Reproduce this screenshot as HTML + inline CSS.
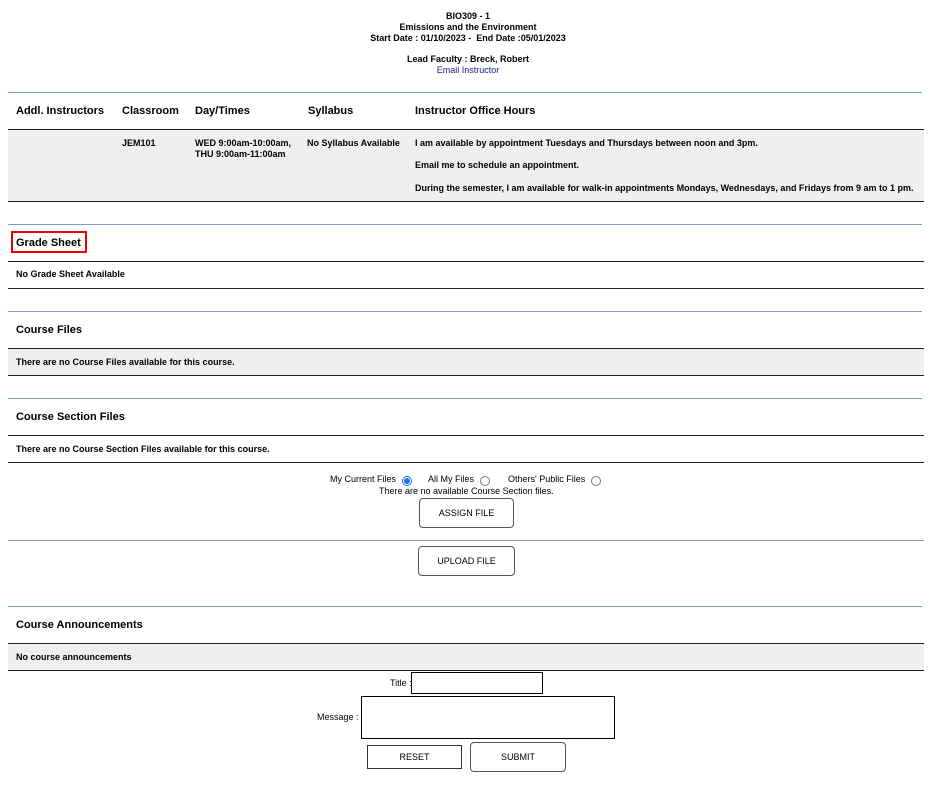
<!DOCTYPE html>
<html><head><meta charset="utf-8"><style>
*{margin:0;padding:0;box-sizing:border-box}
body{width:936px;height:789px;background:#fff;font-family:"Liberation Sans",Arial,sans-serif;color:#000;position:relative;overflow:hidden}
.a{position:absolute;white-space:nowrap}
.c{left:0;width:936px;text-align:center;font-size:9px;font-weight:bold}
.bl{position:absolute;left:8px;width:914px;height:1px;background:#7b9dd0}
.k{position:absolute;left:8px;width:916px;height:1px;background:#222}
.g{position:absolute;left:8px;width:916px;background:#efefef}
.h{font-size:11px;font-weight:bold}
.s{font-size:9px;font-weight:bold}
.n{font-size:9px}
.btn{position:absolute;border:1px solid #555;border-radius:4px;font-size:9px;display:flex;align-items:center;justify-content:center;background:#fff}
.r{position:absolute;width:10px;height:10px;border:1px solid #777;border-radius:50%;background:#fff}
</style></head><body>
<div class="a c" style="top:11px">BIO309 - 1</div>
<div class="a c" style="top:22px">Emissions and the Environment</div>
<div class="a c" style="top:33px">Start Date : 01/10/2023 -&nbsp; End Date :05/01/2023</div>
<div class="a c" style="top:54px">Lead Faculty : Breck, Robert</div>
<div class="a c" style="top:65px;color:#1a1a8a;font-weight:normal">Email Instructor</div>

<div class="bl" style="top:92px"></div>
<div class="a h" style="left:16px;top:105px">Addl. Instructors</div>
<div class="a h" style="left:122px;top:105px">Classroom</div>
<div class="a h" style="left:195px;top:105px">Day/Times</div>
<div class="a h" style="left:308px;top:105px">Syllabus</div>
<div class="a h" style="left:415px;top:105px">Instructor Office Hours</div>
<div class="k" style="top:129px;left:8px"></div>
<div class="g" style="top:130px;height:71px"></div>
<div class="k" style="top:201px"></div>
<div class="a s" style="left:122px;top:138px">JEM101</div>
<div class="a s" style="left:195px;top:138px;line-height:11px">WED 9:00am-10:00am,<br>THU 9:00am-11:00am</div>
<div class="a s" style="left:307px;top:138px">No Syllabus Available</div>
<div class="a s" style="left:415px;top:138px">I am available by appointment Tuesdays and Thursdays between noon and 3pm.</div>
<div class="a s" style="left:415px;top:160px">Email me to schedule an appointment.</div>
<div class="a s" style="left:415px;top:183px">During the semester, I am available for walk-in appointments Mondays, Wednesdays, and Fridays from 9 am to 1 pm.</div>

<div class="bl" style="top:224px"></div>
<div class="a" style="left:11px;top:231px;width:76px;height:22px;border:2px solid #e00"></div>
<div class="a h" style="left:16px;top:237px">Grade Sheet</div>
<div class="k" style="top:261px"></div>
<div class="a s" style="left:16px;top:269px">No Grade Sheet Available</div>
<div class="k" style="top:288px"></div>

<div class="bl" style="top:311px"></div>
<div class="a h" style="left:16px;top:324px">Course Files</div>
<div class="k" style="top:348px"></div>
<div class="g" style="top:349px;height:26px"></div>
<div class="a s" style="left:16px;top:357px">There are no Course Files available for this course.</div>
<div class="k" style="top:375px"></div>

<div class="bl" style="top:398px"></div>
<div class="a h" style="left:16px;top:411px">Course Section Files</div>
<div class="k" style="top:435px"></div>
<div class="a s" style="left:16px;top:444px">There are no Course Section Files available for this course.</div>
<div class="k" style="top:462px"></div>

<div class="a n" style="left:330px;top:474px">My Current Files</div>
<div class="r" style="left:402px;top:476px;border:1px solid #1a73e8"><div style="position:absolute;left:1px;top:1px;width:6px;height:6px;border-radius:50%;background:#1a73e8"></div></div>
<div class="a n" style="left:428px;top:474px">All My Files</div>
<div class="r" style="left:480px;top:476px"></div>
<div class="a n" style="left:508px;top:474px">Others' Public Files</div>
<div class="r" style="left:591px;top:476px"></div>
<div class="a n" style="left:379px;top:486px">There are no available Course Section files.</div>
<div class="btn" style="left:419px;top:498px;width:95px;height:30px">ASSIGN FILE</div>
<div class="a" style="left:8px;top:540px;width:916px;height:1px;background:#999"></div>
<div class="btn" style="left:418px;top:546px;width:97px;height:30px">UPLOAD FILE</div>

<div class="bl" style="top:606px"></div>
<div class="a h" style="left:16px;top:619px">Course Announcements</div>
<div class="k" style="top:643px"></div>
<div class="g" style="top:644px;height:26px"></div>
<div class="a s" style="left:16px;top:652px">No course announcements</div>
<div class="k" style="top:670px"></div>

<div class="a n" style="left:390px;top:678px">Title :</div>
<div class="a" style="left:411px;top:672px;width:132px;height:22px;border:1px solid #000"></div>
<div class="a n" style="left:317px;top:712px">Message :</div>
<div class="a" style="left:361px;top:696px;width:254px;height:43px;border:1px solid #000"></div>
<div class="a" style="left:367px;top:745px;width:95px;height:24px;border:1px solid #333;font-size:9px;display:flex;align-items:center;justify-content:center">RESET</div>
<div class="btn" style="left:470px;top:742px;width:96px;height:30px">SUBMIT</div>
</body></html>
